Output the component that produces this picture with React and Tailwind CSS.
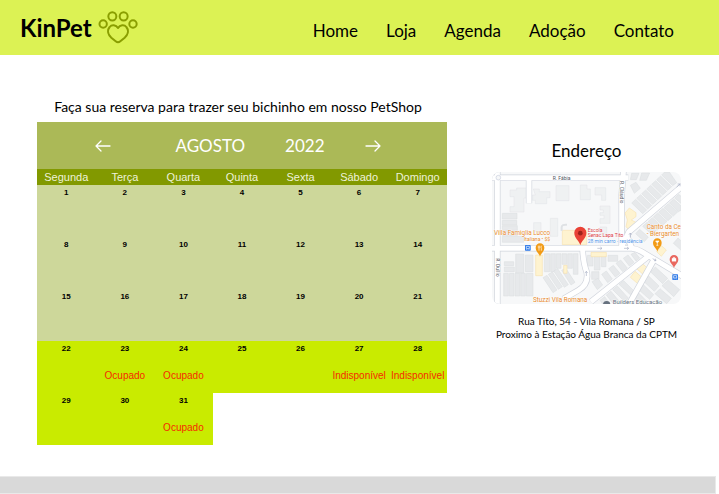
import React from "react";

const links = ["Home", "Loja", "Agenda", "Adoção", "Contato"];
const weekdays = ["Segunda", "Terça", "Quarta", "Quinta", "Sexta", "Sábado", "Domingo"];
const weeks = [
  [1, 2, 3, 4, 5, 6, 7],
  [8, 9, 10, 11, 12, 13, 14],
  [15, 16, 17, 18, 19, 20, 21],
  [22, 23, 24, 25, 26, 27, 28],
  [29, 30, 31],
];
const status = {
  23: "Ocupado",
  24: "Ocupado",
  27: "Indisponível",
  28: "Indisponível",
  31: "Ocupado",
};

function PawLogo() {
  return (
    <svg viewBox="294 33 120 99" className="h-[33px] w-10" fill="none" stroke="#8a9e00" strokeWidth="6" aria-hidden="true">
      <ellipse cx="337" cy="49" rx="12" ry="12.5" />
      <ellipse cx="371" cy="49" rx="12" ry="12.5" />
      <circle cx="309.500" cy="72" r="11" />
      <circle cx="399" cy="72" r="11" />
      <path
        d="M354 84 C348 74 335 73 329 81 C320 92 325 105 334 113 L347 124 Q354 130 361 124 L374 113 C383 105 388 92 379 81 C373 73 360 74 354 84 Z"
        strokeLinejoin="round"
      />
    </svg>
  );
}

function Arrow({ left }) {
  return (
    <svg viewBox="0 0 16 12" className="h-3 w-4" fill="none" stroke="white" strokeWidth="1.3" strokeLinecap="round" strokeLinejoin="round" aria-hidden="true">
      {left ? <path d="M15 6H1M6 1L1 6l5 5" /> : <path d="M1 6h14M10 1l5 5-5 5" />}
    </svg>
  );
}

const roads = [
  "M37 100 V520",
  "M15 128 H430",
  "M416 100 L410 180 V340",
  "M132 128 V205",
  "M15 340 H440 Q455 341 470 350 L600 428",
  "M600 146 L431 291 L410 336",
  "M425 300 L441 341",
  "M293 345 Q295 385 305 411 Q312 448 280 466 L235 492",
  "M506 376 L425 520",
  "M490 364 L318 500",
];

const blocks = [
  "M75 165 h20 v-6 h30 v30 h-8 v42 h-42 v-16 h12 v-30 h-12 Z",
  "M145 162 h18 v8 h32 v18 h-10 v18 h-34 v-10 h-8 v-16 h8 Z",
  "M213 152 h39 v45 h-39 Z",
  "M286 150 h20 v12 h10 v32 h-30 Z",
  "M330 158 h32 v38 h-12 v-16 h-20 Z",
  "M345 213 h30 v52 h-30 v-14 h12 v-10 h-12 v-8 h10 v-8 h-10 Z",
  "M196 250 h22 v54 h-22 Z",
  "M146 263 h22 v26 h-22 Z",
  "M345 276 h20 v28 h-20 Z",
];

const houses = [
  "M52 235 h44 v17 h-44 Z",
  "M52 256 h43 v14 h-43 Z",
  "M52 272 h45 v14 h-45 Z",
  "M52 288 h45 v14 h-45 Z",
  "M52 304 h64 v18 h-64 Z",
  "M58 380 h28 v12 h-28 Z",
  "M58 396 h30 v14 h-30 Z",
  "M92 357 h24 v57 h-24 Z",
  "M121 360 h23 v50 h-23 Z",
  "M178 356 h16 v54 h-16 Z",
  "M197 356 h14 v54 h-14 Z",
  "M214 356 h14 v44 h-14 Z",
  "M231 356 h14 v32 h-14 Z",
  "M248 356 h14 v44 h-14 Z",
  "M265 356 h14 v62 h-14 Z",
  "M56 415 h14 v68 h-14 Z",
  "M73 415 h14 v68 h-14 Z",
  "M90 415 h14 v68 h-14 Z",
  "M107 415 h14 v68 h-14 Z",
  "M124 415 h20 v68 h-20 Z",
  "M174 428 l12 -7 l30 44 l-12 8 Z",
  "M190 418 l12 -7 l30 44 l-12 8 Z",
  "M206 408 l12 -7 l32 48 l-12 8 Z",
  "M230 406 l12 -7 l28 43 l-12 8 Z",
  "M307 361 h17 v32 h-17 Z",
  "M328 361 h17 v44 h-17 Z",
  "M349 361 h14 v34 h-14 Z",
  "M369 361 h29 v18 h-29 Z",
  "M320 410 h22 v23 h-22 Z",
  "M321 440 l18 -10 l14 20 l-16 14 Z",
  "M350 418 l14 -10 l18 24 l-14 11 Z",
  "M371 401 l14 -10 l20 24 l-14 11 Z",
  "M393 385 l14 -10 l20 24 l-14 11 Z",
  "M415 370 l14 -10 l18 22 l-14 11 Z",
  "M438 358 l12 -6 l14 17 l-11 9 Z",
  "M345 496 l14 -11 l16 22 h-22 Z",
  "M364 480 l14 -11 l28 34 h-24 Z",
  "M383 464 l14 -11 l32 35 l-8 14 Z",
  "M402 448 l14 -11 l30 30 l-8 14 Z",
  "M497 411 l14 -15 l37 34 l-15 16 Z",
  "M477 440 l14 -17 l31 30 l-14 16 Z",
  "M463 466 l12 -17 l31 30 l-12 14 Z",
  "M451 490 l10 -16 l28 28 l-8 5 h-22 Z",
  "M531 452 l19 -17 l34 29 l-18 21 Z",
  "M510 476 l15 -15 l34 29 l-14 16 Z",
  "M440 204 l12 -11 l33 32 l-12 11 Z",
  "M455 190 l12 -11 l33 32 l-12 11 Z",
  "M470 176 l12 -11 l33 32 l-12 11 Z",
  "M485 162 l12 -11 l33 32 l-12 11 Z",
  "M500 148 l12 -11 l33 32 l-12 11 Z",
  "M515 134 l12 -11 l33 32 l-12 11 Z",
  "M530 120 l9 -9 h14 l22 32 l-12 9 Z",
  "M440 115 h22 l-8 19 h-18 Z",
  "M470 114 h24 l-10 22 h-20 Z",
  "M436 151 l17 -9 l13 18 l-18 15 Z",
  "M473 274 l13 -12 l28 25 l-13 12 Z",
  "M489 260 l13 -12 l28 25 l-13 12 Z",
  "M505 246 l13 -12 l28 25 l-13 12 Z",
  "M521 232 l13 -12 l28 25 l-13 12 Z",
  "M537 218 l13 -12 l28 25 l-13 12 Z",
  "M553 204 l13 -12 l22 20 v14 l-8 4 Z",
  "M569 189 l12 -11 l10 8 v22 Z",
  "M452 296 l12 -13 l26 23 l-12 14 Z",
  "M565 325 l14 -16 l12 11 v28 Z",
];

const businesses = [
  "M232 286 h73 v43 h-73 Z",
  "M420 234 l13 -15 l20 14 v12 l-14 10 l16 8 l-4 20 l-14 8 l-14 -16 l4 -20 Z",
  "M152 360 h20 v62 h-20 Z",
  "M236 391 h10 v24 h-10 Z",
  "M318 352 h46 v13 h-46 Z",
  "M515 350 l14 -18 l15 13 l-15 19 Z",
  "M436 427 l14 -18 l28 24 l-14 18 Z",
  "M456 402 l15 -17 l23 20 l-14 18 Z",
];

function Pin({ x, y, color, scale = 1, children }) {
  return (
    <g transform={`translate(${x} ${y}) scale(${scale})`}>
      <path d="M0 25 C-2 15 -13 10 -13 -2 A13 13 0 0 1 13 -2 C13 10 2 15 0 25 Z" fill={color} />
      {children}
    </g>
  );
}

function StreetMap() {
  return (
    <svg
      viewBox="21 111 567 396"
      className="block w-full rounded-lg"
      fontFamily="Roboto, sans-serif"
      role="img"
      aria-label="Mapa da região da Rua Tito"
    >
      <rect x="21" y="111" width="567" height="396" fill="#f7f8f9" />
      <g fill="#eff1f2" stroke="#e0e3e6" strokeWidth="1.5">
        {blocks.map((d) => <path key={d} d={d} />)}
      </g>
      <g fill="#e7e9eb" stroke="#d9dcdf" strokeWidth="1.5">
        {houses.map((d) => <path key={d} d={d} />)}
      </g>
      <g fill="#fef3d0" stroke="#f6dda2" strokeWidth="1.5">
        {businesses.map((d) => <path key={d} d={d} />)}
      </g>
      <g fill="none" stroke="#d0d4dc" strokeWidth="19" strokeLinejoin="round">
        {roads.map((d) => <path key={d} d={d} />)}
      </g>
      <g fill="none" stroke="white" strokeWidth="15" strokeLinejoin="round">
        {roads.map((d) => <path key={d} d={d} />)}
      </g>
      <path d="M230 288 V276 Q230 268 246 269" fill="none" stroke="#dfe2e5" strokeWidth="6" />
      <circle cx="40" cy="128" r="7" fill="#f7f8f9" stroke="#c9cede" strokeWidth="2" />
      <g fill="none" stroke="#a9b1c6" strokeWidth="2">
        <path d="M337 340h14m-5-4l5 4-5 4M417 340h14m-5-4l5 4-5 4M304 423v-14m-4 5l4-5 4 5M575 156l10-9m-7 0h7v7M503 371l10 6m-2-6l2 6h-6M436 307v-13m-4 5l4-5 4 5" />
      </g>
      <g fontSize="15" fill="#4f5460" stroke="white" strokeWidth="2" paintOrder="stroke">
        <text x="203" y="134">R. Fábia</text>
        <text transform="translate(405 138) rotate(90)">R. Cláudio</text>
        <text transform="translate(33 370) rotate(90)">R. Duílio</text>
      </g>
      <g fill="#e88a2c" stroke="white" strokeWidth="2" paintOrder="stroke">
        <text x="27" y="299" fontSize="19">Villa Famiglia Lucco</text>
        <text x="117" y="319" fontSize="15">Italiana • $$</text>
        <text x="485" y="283" fontSize="19">Canto da Ce</text>
        <text x="485" y="303" fontSize="19">- Biergarten</text>
        <text x="144" y="500" fontSize="19">Stuzzi Vila Romana</text>
      </g>
      <g stroke="white" strokeWidth="2" paintOrder="stroke" fontSize="15">
        <text x="308" y="290" fill="#d93a42">Escola</text>
        <text x="308" y="306" fill="#d93a42">Senac Lapa Tito</text>
        <text x="308" y="323" fill="#4d93e8">28 min carro - residência</text>
        <text x="383" y="506" fill="#66717e" fontSize="18">Builders Educação</text>
      </g>
      <circle cx="365" cy="509" r="11" fill="#66717e" />
      <g fill="#2876e8">
        <rect x="120" y="330" width="17" height="17" rx="2" />
        <rect x="562" y="418" width="17" height="17" rx="2" />
      </g>
      <g fill="none" stroke="white" strokeWidth="2">
        <path d="M124 334h9v7h-9zM125 343v2m7-2v2M566 422h9v7h-9zM567 431v2m7-2v2" />
      </g>
      <Pin x={165} y={340} color="#f29b16">
        <path d="M-5-8v5q0 3 2 3v7M-1-8v5q0 3-2 3M5-8q-4 4-1 8v7" fill="none" stroke="white" strokeWidth="2" />
      </Pin>
      <Pin x={517} y={325} color="#f29b16">
        <path d="M-5-7H5L0-1ZM0-1v7m-3 0h6" fill="white" stroke="white" strokeWidth="2" />
      </Pin>
      <Pin x={567} y={375} color="#e96860">
        <path d="M-6-5H6v9H-6ZM-2-5v-3h4v3" fill="white" stroke="white" strokeWidth="1" />
      </Pin>
      <Pin x={286} y={296} color="#e94236" scale={1.4}>
        <circle cx="0" cy="-1" r="5" fill="#9e2119" />
      </Pin>
    </svg>
  );
}

export default function App() {
  return (
    <div className="bg-white font-['Lato',sans-serif] text-black">
      <header className="flex h-[55px] items-center justify-between bg-[#dcf254] pl-5 pr-[45px]">
        <a href="#inicio" className="flex items-center gap-1.5 text-2xl font-bold">
          KinPet
          <PawLogo />
        </a>
        <nav className="flex gap-7 pt-1.5 text-[17px] leading-6">
          {links.map((label) => (
            <a key={label} href={`#${label.toLowerCase()}`}>{label}</a>
          ))}
        </nav>
      </header>

      <main className="flex items-start pl-[37px] pr-[38px] pt-[42px]">
        <section className="min-w-0 flex-1">
          <h1 className="pr-2 text-center text-sm leading-5">
            Faça sua reserva para trazer seu bichinho em nosso PetShop
          </h1>
          <div className="mt-[5px] flex h-[47px] items-center justify-center gap-10 bg-[#abb957] pr-2 text-[17px] text-white">
            <button type="button" aria-label="Mês anterior" className="mr-6 flex">
              <Arrow left />
            </button>
            <span>AGOSTO</span>
            <span>2022</span>
            <button type="button" aria-label="Próximo mês" className="flex">
              <Arrow />
            </button>
          </div>
          <table className="w-full table-fixed border-collapse text-center font-['Liberation_Sans',sans-serif]">
            <thead>
              <tr className="h-4 bg-[#829900] text-[11px] leading-4 text-[#eef2d8]">
                {weekdays.map((day) => (
                  <th key={day} scope="col" className="p-0 font-normal">{day}</th>
                ))}
              </tr>
            </thead>
            <tbody>
              {weeks.map((days, week) => (
                <tr key={week} className="h-[52px] align-top">
                  {days.map((day) => (
                    <td key={day} className={week < 3 ? "bg-[#cdd79a] p-0" : "bg-[#c9eb00] p-0"}>
                      <div className="pt-[3px] text-[8px] font-bold leading-[10px]">{day}</div>
                      {status[day] && (
                        <div className="pt-4 text-[10px] leading-3 text-[#f52a00]">{status[day]}</div>
                      )}
                    </td>
                  ))}
                </tr>
              ))}
            </tbody>
          </table>
        </section>

        <aside className="ml-[45px] w-[189px] shrink-0 pt-[42px] text-center">
          <h2 className="text-[17px] leading-6">Endereço</h2>
          <div className="mt-[9px]">
            <StreetMap />
          </div>
          <address className="mt-[11px] whitespace-nowrap text-[10px] not-italic leading-[13px]">
            Rua Tito, 54 - Vila Romana / SP
            <br />
            Proximo à Estação Água Branca da CPTM
          </address>
        </aside>
      </main>

      <footer className="mr-[3px] mt-[31px] h-[18px] border-y border-r border-[#e9e9e9] bg-[#d9d9d9]" />
    </div>
  );
}
